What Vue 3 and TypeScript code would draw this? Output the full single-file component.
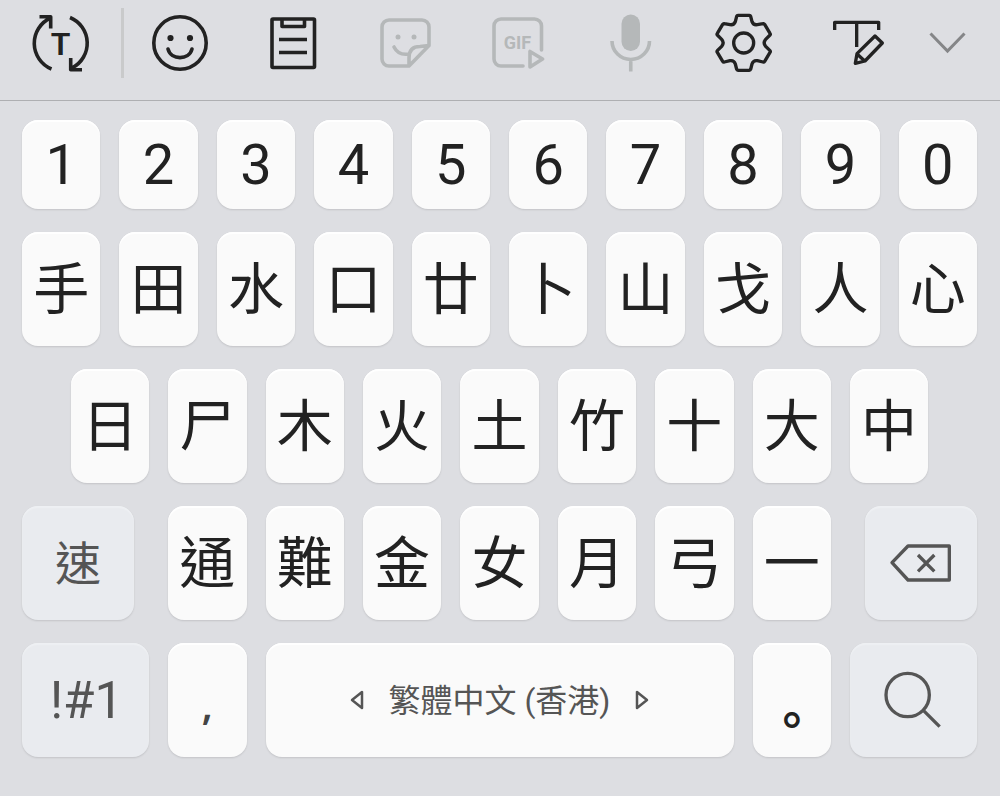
<script setup lang="ts">
interface Key {
  label: string
  kind?: string
}

const digits: string[] = ['1', '2', '3', '4', '5', '6', '7', '8', '9', '0']
const upper: string[] = ['手', '田', '水', '口', '廿', '卜', '山', '戈', '人', '心']
const middle: string[] = ['日', '尸', '木', '火', '土', '竹', '十', '大', '中']
const lower: string[] = ['通', '難', '金', '女', '月', '弓', '一']

const keys: Key[] = [
  ...digits.map((label) => ({ label })),
  ...upper.map((label) => ({ label, kind: 'han' })),
  ...middle.map((label, i) => ({ label, kind: i === 0 ? 'han indent' : 'han' })),
]
</script>

<template>
  <main class="keyboard" lang="zh-Hant">
    <header class="toolbar">
      <button class="tool mode" type="button" aria-label="Text mode">
        <svg class="icon" viewBox="0 0 72 72">
          <path d="M27.500 62A27.800 27.800 0 0 1 26.500 11M15.500 9.700H26.700V21.500M46 10.500A27.800 27.800 0 0 1 48 61M46.700 51V62.700H58" />
          <text class="glyph-t" x="36.500" y="48">T</text>
        </svg>
      </button>
      <span class="divider"></span>
      <button class="tool" type="button" aria-label="Emoji">
        <svg class="icon" viewBox="0 0 72 72">
          <circle cx="36" cy="36" r="26.200" />
          <path class="round" d="M24 42C27 53.500 45 53.500 48 42" />
          <circle class="dot" cx="26.500" cy="31" r="3.100" />
          <circle class="dot" cx="46" cy="31" r="3.100" />
        </svg>
      </button>
      <button class="tool" type="button" aria-label="Clipboard">
        <svg class="icon" viewBox="0 0 72 72">
          <rect x="15" y="12" width="42.500" height="48.500" rx="1" />
          <path d="M25 12V19.500H47.500V12M22 32.500H50M22 45.500H50" />
        </svg>
      </button>
      <button class="tool muted" type="button" aria-label="Stickers">
        <svg class="icon" viewBox="0 0 72 72">
          <path class="round" d="M40 59H20a7 7 0 0 1-7-7V20a7 7 0 0 1 7-7H53a7 7 0 0 1 7 7V38.500L40 59ZM40 59V51C40 43 44 39.500 51 39.500L60 38.500M25 40C28 46 34 48 40 47" />
          <circle class="dot" cx="29" cy="30" r="2.500" />
          <circle class="dot" cx="45" cy="30" r="2.500" />
        </svg>
      </button>
      <button class="tool muted" type="button" aria-label="GIF">
        <svg class="icon" viewBox="0 0 72 72">
          <path class="round" d="M59.500 43V19a7 7 0 0 0-7-7H19a7 7 0 0 0-7 7V52a7 7 0 0 0 7 7H41M48 44.500V60L60.500 52Z" />
          <text class="glyph-gif" x="35.500" y="42">GIF</text>
        </svg>
      </button>
      <button class="tool muted" type="button" aria-label="Voice input">
        <svg class="icon" viewBox="0 0 72 72">
          <rect class="dot" x="26.500" y="7.500" width="18.500" height="36.500" rx="9.200" />
          <path d="M17 34a18.750 18.500 0 0 0 37.500 0M35.750 52.500V64.500" />
        </svg>
      </button>
      <button class="tool" type="button" aria-label="Settings">
        <svg class="icon fine" viewBox="21 21 216 216">
          <path d="M114 46H148Q151 46 152 49L156 65Q160 76 172 74L189 71Q192 70 194 73L210 100Q212 103 210 105L197 118Q188 128 197 139L210 152Q212 154 210 157L194 184Q192 187 189 186L172 182Q160 180 156 192L152 208Q151 211 148 211H114Q111 211 110 208L106 192Q102 180 90 182L73 186Q70 187 68 184L52 157Q50 154 52 152L65 139Q74 128 65 118L52 105Q50 103 52 100L68 73Q70 70 73 71L90 74Q102 76 106 65L110 49Q111 46 114 46Z" />
          <circle cx="131" cy="129" r="30" />
        </svg>
      </button>
      <button class="tool" type="button" aria-label="Handwriting">
        <svg class="icon fine" viewBox="359 21 216 216">
          <path d="M403 90V67H535V90M469 67V141M524 108L546 129L494 183L465 190L470 161ZM471 163L493 183" />
        </svg>
      </button>
      <button class="tool collapse" type="button" aria-label="Collapse toolbar">
        <svg class="chevron" viewBox="0 0 40 40">
          <path d="M3.500 10.500L20.500 28L37.500 10.500" />
        </svg>
      </button>
    </header>

    <section class="keys">
      <button v-for="key in keys" :key="key.label" class="key" :class="key.kind" type="button">
        {{ key.label }}
      </button>

      <button class="key special quick" type="button">速</button>
      <button
        v-for="(label, i) in lower"
        :key="label"
        class="key han"
        :class="{ first: i === 0 }"
        type="button"
      >
        {{ label }}
      </button>
      <button class="key special erase" type="button" aria-label="Backspace">
        <svg class="icon fine" viewBox="435 112 216 216">
          <path d="M456 219L504 169H628V271H504ZM534 196L583 245M583 196L534 245" />
        </svg>
      </button>

      <button class="key special symbols" type="button">!#1</button>
      <button class="key comma" type="button">,</button>
      <button class="key space" type="button">
        <svg class="arrow" viewBox="0 0 14 20"><path d="M12 2V18L2 10Z" /></svg>
        <span class="language">繁體中文 (香港)</span>
        <svg class="arrow" viewBox="0 0 14 20"><path d="M2 2V18L12 10Z" /></svg>
      </button>
      <button class="key stop" type="button">。</button>
      <button class="key special search" type="button" aria-label="Search">
        <svg class="icon fine" viewBox="412 523 216 216">
          <circle cx="504" cy="616" r="65" />
          <path d="M551 662L600 711" />
        </svg>
      </button>
    </section>
  </main>
</template>

<style>
body {
  margin: 0;
  background: #dddee2;
}
</style>

<style scoped>
.keyboard {
  min-height: 100vh;
  box-sizing: border-box;
  background: #dddee2;
  color: #222;
  font-family: Roboto, "Noto Sans CJK TC", sans-serif;
}

button {
  margin: 0;
  padding: 0;
  border: 0;
  background: none;
  color: inherit;
  font: inherit;
  cursor: pointer;
}

.toolbar {
  display: flex;
  align-items: center;
  padding: 7px 18px 21px 0;
  border-bottom: 1px solid #aeafb2;
}

.tool {
  display: flex;
  flex: 1 1 0;
  justify-content: center;
}

.tool.mode {
  flex: 0 0 119px;
  margin-right: 2px;
}

.tool.collapse {
  flex: 0 0 70px;
  color: #858688;
}

.tool.muted {
  color: #b5b8b9;
}

.divider {
  width: 3px;
  height: 70px;
  background: #c9cacb;
}

.icon {
  display: block;
  flex: none;
  width: 72px;
  height: 72px;
  fill: none;
  stroke: currentColor;
  stroke-width: 3.600;
  stroke-linejoin: round;
}

.icon.fine {
  stroke-width: 10;
}

.round {
  stroke-linecap: round;
}

.dot {
  fill: currentColor;
  stroke: none;
}

.glyph-t,
.glyph-gif {
  fill: currentColor;
  stroke: none;
  font-weight: 700;
  text-anchor: middle;
}

.glyph-t {
  font-size: 32px;
  font-weight: 600;
}

.glyph-gif {
  font-size: 18px;
}

.chevron {
  width: 40px;
  height: 40px;
  fill: none;
  stroke: currentColor;
  stroke-width: 3;
}

.keys {
  display: grid;
  grid-template-columns: repeat(20, minmax(0, 1fr));
  grid-template-rows: 89px;
  grid-auto-rows: 114px;
  gap: 23px 19px;
  padding: 19px 23px 39px 22px;
}

.key {
  display: flex;
  grid-column: span 2;
  align-items: center;
  justify-content: center;
  border-radius: 16px;
  background: #fafafa;
  box-shadow: inset 0 2px 1px #fff, 0 1px 2px rgba(0, 0, 0, 0.12);
  font-size: 56px;
  line-height: 64px;
}

.key.han {
  padding-top: 2px;
}

.key.indent {
  grid-column: 2 / span 2;
}

.key.first {
  grid-column: 4 / span 2;
}

.key.special {
  grid-column: span 3;
  background: #e9ebef;
  box-shadow: inset 0 2px 1px #eef0f3, 0 1px 2px rgba(0, 0, 0, 0.12);
  color: #555;
}

.key.quick {
  grid-column: 1 / span 3;
  width: 88%;
  padding-top: 2px;
  font-size: 46px;
}

.key.erase {
  grid-column: 18 / span 3;
  width: 88%;
  justify-self: end;
}

.key.symbols {
  padding-top: 2px;
  padding-left: 2px;
  font-size: 51px;
}

.key.comma {
  padding-top: 8px;
  color: #444;
  font-family: "Open Sans", sans-serif;
  font-size: 42px;
  font-weight: 600;
}

.key.space {
  grid-column: span 10;
  gap: 24px;
  color: #555;
  font-size: 32px;
}

.language {
  padding-top: 2px;
}

.key.stop {
  padding-top: 34px;
  font-family: "Noto Sans CJK TC", sans-serif;
  font-size: 48px;
  font-weight: 700;
}

.arrow {
  width: 14px;
  height: 20px;
  fill: none;
  stroke: currentColor;
  stroke-width: 2.500;
  stroke-linejoin: round;
}
</style>
